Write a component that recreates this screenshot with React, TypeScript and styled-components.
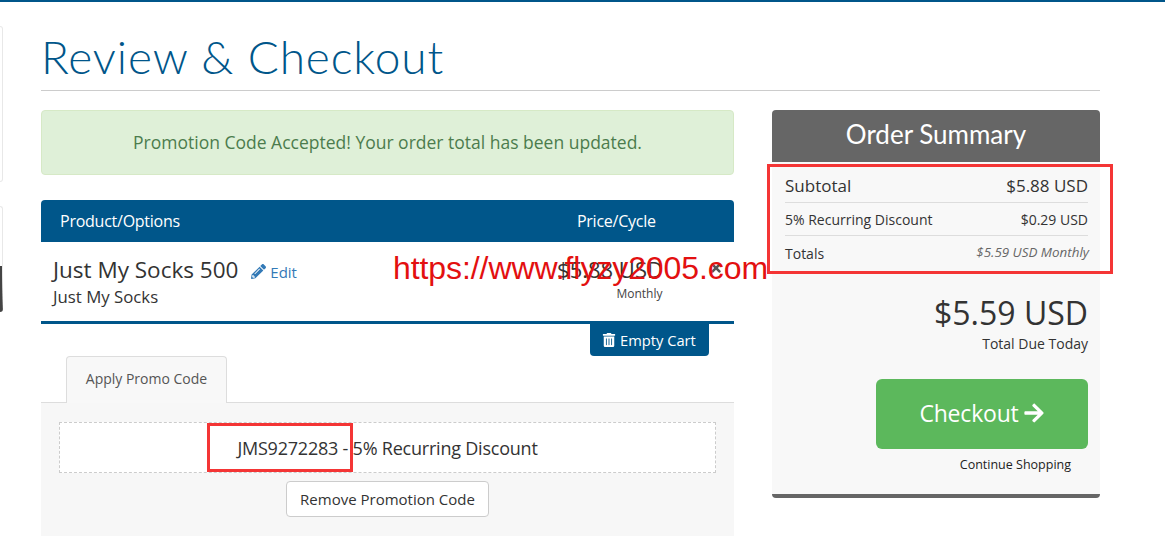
import React from "react";
import styled, { createGlobalStyle } from "styled-components";
import { FaArrowRight, FaPencilAlt, FaTimes, FaTrashAlt } from "react-icons/fa";

const GlobalStyle = createGlobalStyle`
  html, body {
    margin: 0;
    padding: 0;
    background: #fff;
    height: 100%;
    overflow: hidden;
  }
  body {
    font-family: "Open Sans", "Liberation Sans", sans-serif;
    font-size: 14px;
    color: #333;
  }
  * {
    box-sizing: border-box;
  }
`;

const App = () => {
  return (
    <Page>
      <GlobalStyle />
      <Sliver>
        <SliverCard $height={156} />
        <SliverCard $height={106} $dark />
      </Sliver>
      <Main>
        <Title>Review &amp; Checkout</Title>
        <Columns>
          <div>
            <Alert>Promotion Code Accepted! Your order total has been updated.</Alert>
            <TableHead>
              <span>Product/Options</span>
              <PriceHead>Price/Cycle</PriceHead>
            </TableHead>
            <ItemRow>
              <ItemInfo>
                <ItemName>
                  Just My Socks 500
                  <EditLink>
                    <FaPencilAlt size={15} /> Edit
                  </EditLink>
                </ItemName>
                <ItemGroup>Just My Socks</ItemGroup>
              </ItemInfo>
              <ItemPrice>
                <Amount>$5.88 USD</Amount>
                <Cycle>Monthly</Cycle>
              </ItemPrice>
              <RemoveItem>
                <FaTimes size={14} />
              </RemoveItem>
            </ItemRow>
            <CartActions>
              <EmptyCart>
                <FaTrashAlt size={14} /> Empty Cart
              </EmptyCart>
            </CartActions>
            <Tabs>
              <Tab>Apply Promo Code</Tab>
            </Tabs>
            <TabPanel>
              <PromoBox>JMS9272283 - 5% Recurring Discount</PromoBox>
              <RemovePromo>Remove Promotion Code</RemovePromo>
            </TabPanel>
          </div>
          <Summary>
            <SummaryTitle>Order Summary</SummaryTitle>
            <SummaryBody>
              <SummaryRow $size={17} $height={41} $pad={6}>
                <span>Subtotal</span>
                <span>$5.88 USD</span>
              </SummaryRow>
              <SummaryRow $size={14} $height={33}>
                <span>5% Recurring Discount</span>
                <span>$0.29 USD</span>
              </SummaryRow>
              <SummaryRow $size={14} $height={34} $last>
                <span>Totals</span>
                <Recurring>$5.59 USD Monthly</Recurring>
              </SummaryRow>
              <TotalDue>$5.59 USD</TotalDue>
              <TotalLabel>Total Due Today</TotalLabel>
              <CheckoutRow>
                <CheckoutButton>
                  Checkout <FaArrowRight size={22} />
                </CheckoutButton>
              </CheckoutRow>
              <ContinueRow>
                <ContinueLink>Continue Shopping</ContinueLink>
              </ContinueRow>
            </SummaryBody>
          </Summary>
        </Columns>
      </Main>
      <Watermark>https://www.flyzy2005.com</Watermark>
      <RedBoxSummary />
      <RedBoxCode />
    </Page>
  );
};

const Page = styled.div`
  position: relative;
  display: flex;
  width: 1165px;
  height: 542px;
  overflow: hidden;
  border-top: 2px solid #00568a;
`;

const Sliver = styled.div`
  width: 3px;
  padding-top: 24px;
  display: flex;
  flex-direction: column;
  gap: 24px;
`;

const SliverCard = styled.div<{ $height: number; $dark?: boolean }>`
  height: ${(p) => p.$height}px;
  background: #fff;
  border: 1px solid #e8e8e8;
  border-left: none;
  border-radius: 0 4px 4px 0;
  border-bottom: ${(p) => (p.$dark ? "46px solid #444" : "1px solid #e8e8e8")};
`;

const Main = styled.div`
  width: 1059px;
  margin-left: 38px;
`;

const Title = styled.h1`
  margin: 0 0 19px;
  height: 89px;
  padding-top: 27px;
  border-bottom: 1px solid #ccc;
  font-family: "Lato", "Open Sans", sans-serif;
  font-size: 46px;
  line-height: 56px;
  font-weight: 300;
  letter-spacing: 0.9px;
  color: #00568a;
  white-space: nowrap;
`;

const Columns = styled.div`
  display: grid;
  grid-template-columns: 693px 328px;
  column-gap: 38px;
  align-items: start;
`;

const Alert = styled.div`
  height: 65px;
  margin-bottom: 25px;
  background: #dff0d8;
  border: 1px solid #d6e9c6;
  border-radius: 4px;
  color: #4c7c4d;
  font-size: 17.5px;
  line-height: 63px;
  text-align: center;
`;

const TableHead = styled.div`
  display: flex;
  align-items: center;
  height: 42px;
  padding-left: 19px;
  background: #00568a;
  border-radius: 4px 4px 0 0;
  color: #fff;
  font-size: 16px;
  font-weight: 500;
  letter-spacing: -0.25px;
`;

const PriceHead = styled.span`
  margin-left: 397px;
`;

const ItemRow = styled.div`
  display: flex;
  height: 82px;
  border-bottom: 3px solid #00568a;
`;

const ItemInfo = styled.div`
  width: 500px;
  padding: 13px 0 0 12px;
`;

const ItemName = styled.div`
  font-size: 22.5px;
  line-height: 30px;
  color: #333;
`;

const EditLink = styled.a`
  margin-left: 13px;
  font-size: 15px;
  color: #337ab7;
  svg {
    vertical-align: -1px;
  }
`;

const ItemGroup = styled.div`
  font-size: 16.8px;
  line-height: 24px;
  margin-top: -2px;
`;

const ItemPrice = styled.div`
  width: 163px;
  padding-top: 12px;
  text-align: center;
`;

const Amount = styled.div`
  font-size: 22px;
  line-height: 30px;
  margin-left: 5px;
  margin-right: 30px;
  white-space: nowrap;
`;

const Cycle = styled.div`
  font-size: 12px;
  line-height: 18px;
  margin-left: 34px;
  margin-top: 1px;
  color: #444;
`;

const RemoveItem = styled.div`
  padding: 18px 0 0 5px;
  color: #555;
`;

const CartActions = styled.div`
  display: flex;
  justify-content: flex-end;
  padding-right: 25px;
`;

const EmptyCart = styled.div`
  display: flex;
  align-items: center;
  gap: 4px;
  width: 119px;
  height: 32px;
  padding-left: 12px;
  background: #00568a;
  border-radius: 0 0 4px 4px;
  color: #fff;
  font-size: 14.7px;
  font-weight: 500;
`;

const Tabs = styled.div`
  display: flex;
  padding-left: 25px;
  border-bottom: 1px solid #ddd;
`;

const Tab = styled.div`
  width: 161px;
  height: 47px;
  margin-bottom: -1px;
  background: #f8f8f8;
  border: 1px solid #ddd;
  border-bottom: none;
  border-radius: 4px 4px 0 0;
  color: #555;
  font-size: 14px;
  line-height: 44px;
  text-align: center;
`;

const TabPanel = styled.div`
  height: 133px;
  padding: 19px 18px 0;
  background: #f7f7f7;
  text-align: center;
`;

const PromoBox = styled.div`
  height: 51px;
  background: #fff;
  border: 1px dashed #ccc;
  font-size: 18px;
  line-height: 50px;
  letter-spacing: -0.22px;
`;

const RemovePromo = styled.div`
  display: inline-block;
  width: 203px;
  height: 36px;
  margin-top: 8px;
  background: #fff;
  border: 1px solid #ccc;
  border-radius: 4px;
  font-size: 15px;
  line-height: 34px;
`;

const Summary = styled.div`
  height: 388px;
  background: #f8f8f8;
  border-bottom: 4px solid #666;
  border-radius: 4px;
  overflow: hidden;
`;

const SummaryTitle = styled.div`
  height: 52px;
  background: #666;
  color: #fff;
  font-family: "Lato", "Open Sans", sans-serif;
  font-size: 26px;
  line-height: 49px;
  text-align: center;
`;

const SummaryBody = styled.div`
  padding: 0 12px 0 13px;
`;

const SummaryRow = styled.div<{ $size: number; $height: number; $last?: boolean; $pad?: number }>`
  display: flex;
  justify-content: space-between;
  align-items: center;
  height: ${(p) => p.$height}px;
  padding-top: ${(p) => p.$pad || 0}px;
  border-bottom: ${(p) => (p.$last ? "none" : "1px solid #ddd")};
  font-size: ${(p) => p.$size}px;
`;

const Recurring = styled.span`
  font-size: 13.4px;
  font-style: italic;
  color: #666;
  margin-top: -3px;
  margin-right: -1px;
`;

const TotalDue = styled.div`
  margin-top: 22px;
  font-size: 32px;
  line-height: 42px;
  text-align: right;
`;

const TotalLabel = styled.div`
  font-size: 14px;
  line-height: 20px;
  text-align: right;
`;

const CheckoutRow = styled.div`
  display: flex;
  justify-content: flex-end;
  margin-top: 25px;
`;

const CheckoutButton = styled.div`
  display: flex;
  align-items: center;
  justify-content: center;
  gap: 4px;
  width: 212px;
  height: 70px;
  padding-bottom: 2px;
  background: #5cb85c;
  border-radius: 6px;
  color: #fff;
  font-size: 23px;
  letter-spacing: -0.2px;
`;

const ContinueRow = styled.div`
  display: flex;
  justify-content: flex-end;
  padding: 7px 17px 0 0;
`;

const ContinueLink = styled.a`
  font-size: 12.5px;
  line-height: 17px;
  color: #222;
`;

const Watermark = styled.div`
  position: absolute;
  left: 393px;
  top: 248px;
  color: #e31010;
  font-family: "Liberation Sans", Arial, sans-serif;
  font-size: 32px;
  line-height: 37px;
  letter-spacing: -0.08px;
  white-space: nowrap;
`;

const RedBoxSummary = styled.div`
  position: absolute;
  left: 767px;
  top: 162px;
  width: 346px;
  height: 110px;
  border: 3px solid #f43535;
`;

const RedBoxCode = styled.div`
  position: absolute;
  left: 207px;
  top: 421px;
  width: 146px;
  height: 49px;
  border: 3px solid #f43535;
`;

export default App;
